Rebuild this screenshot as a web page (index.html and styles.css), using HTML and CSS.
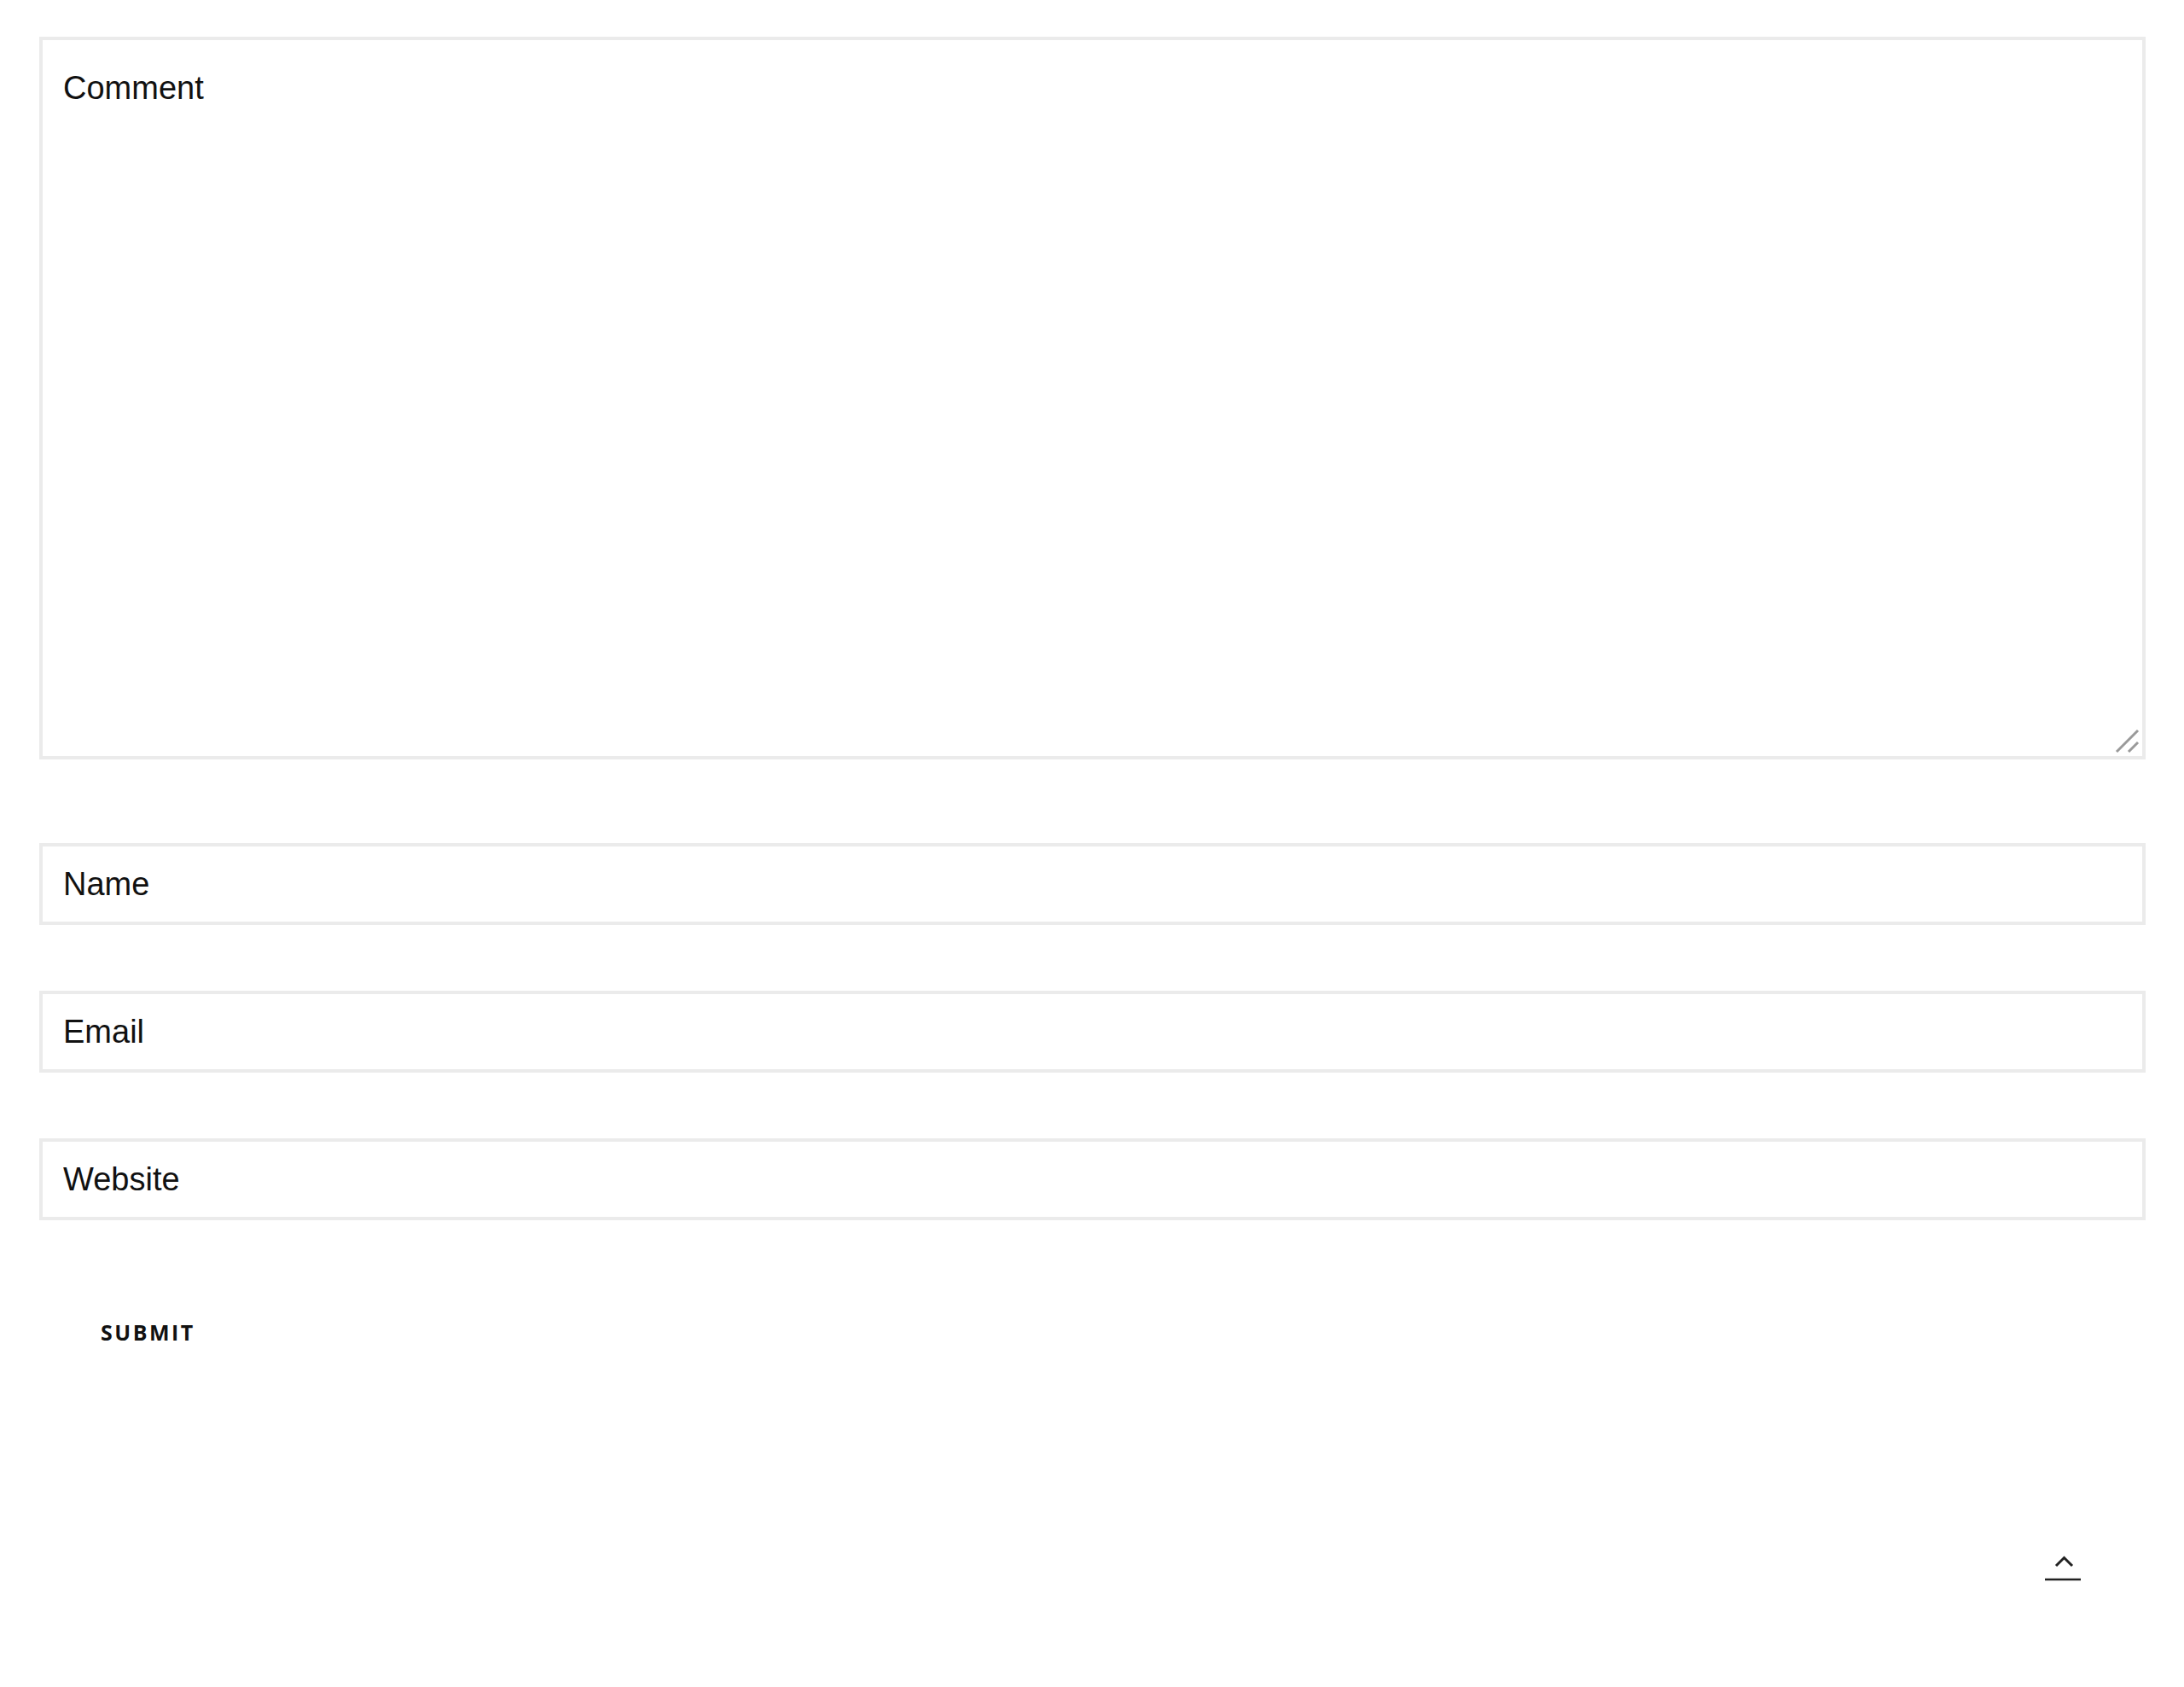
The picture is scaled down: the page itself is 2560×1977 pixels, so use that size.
FILE: index.html
```html
<!DOCTYPE html>
<html lang="en">
<head>
  <meta charset="UTF-8" />
  <title>Leave a comment</title>
  <link rel="stylesheet" href="styles.css">
</head>
<body>

<form class="comment-form">
  <div class="comment-box">
    <textarea class="field field-comment" name="comment" placeholder="Comment"></textarea>
    <svg class="resizer" width="30" height="30" viewBox="0 0 30 30">
      <line x1="2" y1="27" x2="27" y2="2" />
      <line x1="16" y1="27" x2="27" y2="16" />
    </svg>
  </div>
  <input class="field" type="text" name="author" placeholder="Name">
  <input class="field" type="email" name="email" placeholder="Email">
  <input class="field" type="url" name="url" placeholder="Website">
  <div class="form-submit">
    <button class="submit" type="submit">Submit</button>
  </div>
</form>

<a class="to-top" href="#" aria-label="Back to top">
  <svg width="44" height="32" viewBox="0 0 44 32">
    <polyline class="chevron" points="13,14 22.5,4.5 32,14" />
    <line class="bar" x1="0" y1="30" x2="42" y2="30" />
  </svg>
</a>

</body>
</html>
```

FILE: styles.css
```css
body {
  margin: 0;
  background: #fff;
  font-family: "Liberation Sans", Arial, sans-serif;
  color: #111;
}
.comment-form {
  display: flex;
  flex-direction: column;
  padding: 43px 45px 0 46px;
}
.comment-box {
  position: relative;
}
.field {
  display: block;
  width: 100%;
  box-sizing: border-box;
  height: 96px;
  margin: 77px 0 0;
  padding: 0 24px;
  border: 4px solid #ebebeb;
  border-radius: 0;
  background: #fff;
  font-family: "Liberation Sans", Arial, sans-serif;
  font-size: 38px;
  color: #111;
  outline: none;
}
.field::placeholder {
  color: #111;
  opacity: 1;
}
.comment-box + .field {
  margin-top: 98px;
}
.field-comment {
  height: 847px;
  margin: 0;
  padding: 35px 24px;
  resize: none;
}
.resizer {
  position: absolute;
  right: 6px;
  bottom: 6px;
}
.resizer line {
  stroke: #9a9a9a;
  stroke-width: 3;
}
.form-submit {
  margin-top: 99px;
}
.submit {
  padding: 20px 72px;
  border: 0;
  background: transparent;
  font-family: "Open Sans", sans-serif;
  font-weight: 700;
  font-size: 25px;
  line-height: 1;
  letter-spacing: 2.5px;
  text-transform: uppercase;
  color: #111;
  cursor: pointer;
}
.to-top {
  position: fixed;
  right: 119px;
  bottom: 124px;
  display: block;
}
.to-top svg {
  display: block;
}
.to-top .chevron {
  fill: none;
  stroke: #222;
  stroke-width: 3;
}
.to-top .bar {
  stroke: #222;
  stroke-width: 2.5;
}
```
